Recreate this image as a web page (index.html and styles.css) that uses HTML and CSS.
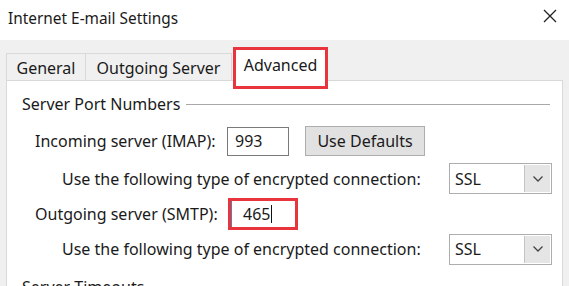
FILE: index.html
```html
<!DOCTYPE html>
<html>
<head>
<meta charset="utf-8">
<link rel="stylesheet" href="styles.css">
</head>
<body>
<div class="window">
  <div class="titlebar">
    <span class="title">Internet E-mail Settings</span>
    <svg class="close" width="14" height="14" viewBox="0 0 14 14"><path d="M1 1 L13 13 M13 1 L1 13" stroke="#222" stroke-width="1.3" fill="none"/></svg>
  </div>
  <div class="body">
    <div class="tabs">
      <div class="tab tab-general">General</div>
      <div class="tab tab-outgoing">Outgoing Server</div>
      <div class="tab tab-advanced">Advanced</div>
    </div>
    <div class="panel">
      <div class="group-header">
        <span class="group-title">Server Port Numbers</span>
        <span class="group-line"></span>
      </div>
      <div class="row row-imap">
        <span class="label label-server">Incoming server (IMAP):</span>
        <div class="input input-imap">993</div>
        <div class="button">Use Defaults</div>
      </div>
      <div class="row row-enc">
        <span class="label label-enc">Use the following type of encrypted connection:</span>
        <div class="select"><span class="select-value">SSL</span><span class="select-btn"><svg width="12" height="8" viewBox="0 0 12 8"><path d="M1.5 1.5 L6 6 L10.5 1.5" stroke="#444" stroke-width="1.3" fill="none"/></svg></span></div>
      </div>
      <div class="row row-smtp">
        <span class="label label-server">Outgoing server (SMTP):</span>
        <div class="highlight"><div class="input input-smtp">465<span class="caret"></span></div></div>
      </div>
      <div class="row row-enc2">
        <span class="label label-enc">Use the following type of encrypted connection:</span>
        <div class="select"><span class="select-value">SSL</span><span class="select-btn"><svg width="12" height="8" viewBox="0 0 12 8"><path d="M1.5 1.5 L6 6 L10.5 1.5" stroke="#444" stroke-width="1.3" fill="none"/></svg></span></div>
      </div>
      <div class="group-header group-timeouts">
        <span class="group-title">Server Timeouts</span>
      </div>
    </div>
  </div>
</div>
</body>
</html>
```

FILE: styles.css
```css
html, body {
  margin: 0;
  padding: 0;
}
body {
  width: 569px;
  height: 286px;
  overflow: hidden;
  background: #f0f0f0;
  font-family: "Noto Sans", "Open Sans", sans-serif;
  font-size: 16px;
  color: #1a1a1a;
}
.window {
  width: 569px;
  height: 286px;
  overflow: hidden;
  display: flex;
  flex-direction: column;
}
.titlebar {
  height: 40px;
  background: #ffffff;
  display: flex;
  align-items: center;
  justify-content: space-between;
  padding: 0 12px 0 8px;
  flex-shrink: 0;
}
.title {
  font-size: 15.4px;
  color: #1a1a1a;
  margin-top: -4px;
}
.close {
  margin-top: -8px;
}
.body {
  flex: 1;
  min-height: 0;
  display: flex;
  flex-direction: column;
  padding-left: 6px;
}
.tabs {
  display: flex;
  align-items: flex-end;
  height: 40px;
  flex-shrink: 0;
}
.tab {
  height: 27px;
  box-sizing: border-box;
  border: 1px solid #d9d9d9;
  border-bottom: none;
  background: #f0f0f0;
  display: flex;
  align-items: center;
  justify-content: center;
  padding-top: 1px;
}
.tab-general {
  width: 80px;
}
.tab-outgoing {
  width: 146px;
  border-left: none;
}
.tab-advanced {
  position: relative;
  z-index: 2;
  width: 95px;
  height: 42px;
  margin-bottom: -9px;
  margin-left: 1px;
  background: #ffffff;
  border: 3px solid #e8343c;
  align-items: flex-start;
  padding-top: 4px;
}
.panel {
  width: 557px;
  flex: 1;
  min-height: 0;
  overflow: hidden;
  box-sizing: border-box;
  background: #ffffff;
  border: 1px solid #d9d9d9;
  border-bottom: none;
  padding-top: 9px;
  display: flex;
  flex-direction: column;
}
.group-header {
  height: 28px;
  display: flex;
  align-items: center;
  padding-left: 15px;
  padding-right: 12px;
  flex-shrink: 0;
}
.group-line {
  flex: 1;
  height: 1px;
  background: #a8a8a8;
  margin-left: 6px;
  margin-top: 1px;
}
.row {
  display: flex;
  align-items: center;
  flex-shrink: 0;
}
.row-imap {
  height: 32px;
  margin-top: 7px;
}
.row-enc {
  height: 33px;
  margin-top: 5px;
}
.row-smtp {
  height: 34px;
  margin-top: 2px;
}
.row-enc2 {
  height: 32px;
  margin-top: 2px;
}
.group-timeouts {
  margin-top: 8px;
}
.label-server {
  padding-left: 28px;
  width: 192px;
}
.label-enc {
  padding-left: 55px;
  width: 387px;
}
.input {
  box-sizing: border-box;
  background: #ffffff;
  border: 1px solid #7a7a7a;
  display: flex;
  align-items: center;
}
.input-imap {
  width: 62px;
  height: 29px;
  padding-left: 7px;
}
.button {
  box-sizing: border-box;
  width: 120px;
  height: 30px;
  margin-left: 16px;
  background: #e1e1e1;
  border: 1px solid #adadad;
  display: flex;
  align-items: center;
  justify-content: center;
}
.highlight {
  box-sizing: border-box;
  width: 70px;
  height: 32px;
  border: 3px solid #e8343c;
  margin-left: 1px;
  background: #ffffff;
}
.input-smtp {
  width: 100%;
  height: 100%;
  border: none;
  border-left: 1px solid #5b7fa8;
  padding-left: 11px;
}
.caret {
  display: inline-block;
  width: 1px;
  height: 18px;
  background: #111;
  margin-left: 1px;
}
.select {
  box-sizing: border-box;
  width: 103px;
  height: 31px;
  border: 1px solid #adadad;
  background: #ffffff;
  display: flex;
  align-items: stretch;
}
.select-value {
  flex: 1;
  display: flex;
  align-items: center;
  padding-left: 5px;
}
.select-btn {
  width: 26px;
  box-sizing: border-box;
  background: #e5e5e5;
  border-left: 1px solid #c4c4c4;
  display: flex;
  align-items: center;
  justify-content: center;
  margin: 1px;
}
```
